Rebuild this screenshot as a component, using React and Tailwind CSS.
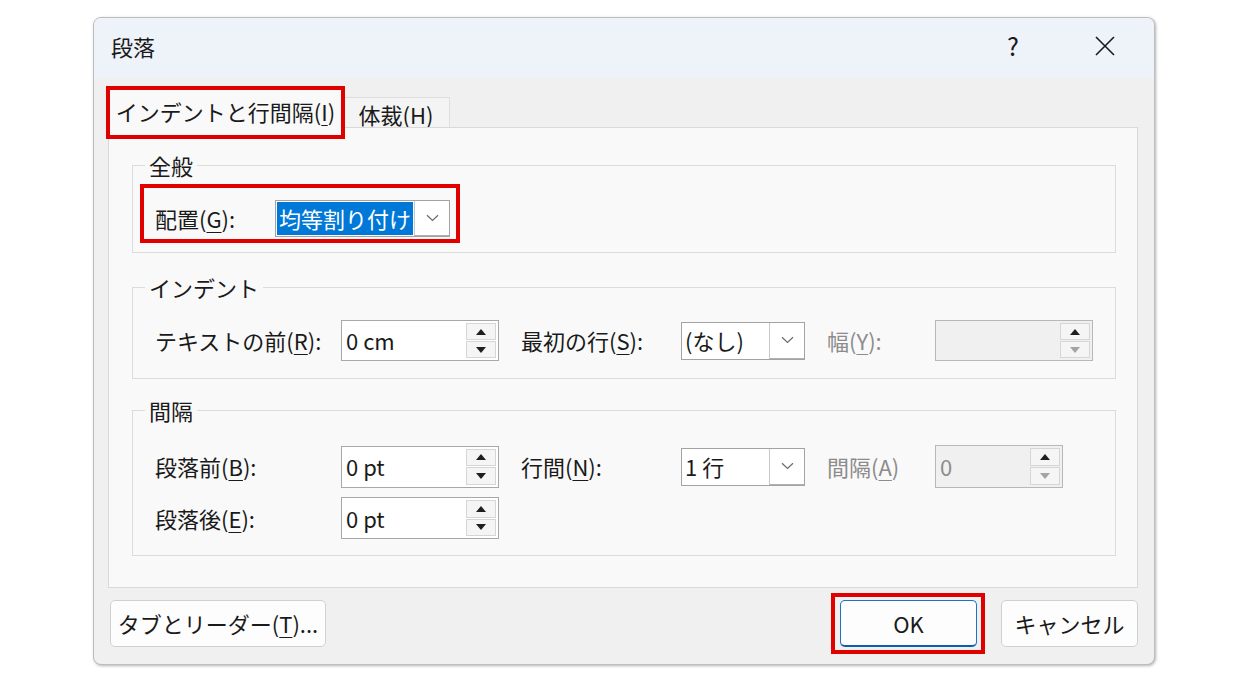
import React from 'react'

const Ul = ({ children }) => (
  <span className="underline underline-offset-[4px] decoration-1">{children}</span>
)

function Chevron() {
  return (
    <svg width="13" height="8" viewBox="0 0 13 8" fill="none">
      <path d="M1 1.2 L6.5 6.5 L12 1.2" stroke="#6b6b6b" strokeWidth="1.2" />
    </svg>
  )
}

function SpinButtons({ disabled = false }) {
  return (
    <div className="flex flex-col w-[32px] h-full py-[2px] pr-[2px] gap-[1px]">
      <div className="flex-1 flex items-center justify-center border border-[#d6d6d6] bg-[#f5f5f5]">
        <svg width="10" height="6" viewBox="0 0 10 6">
          <path d="M0 6 L5 0 L10 6Z" fill="#1f1f1f" />
        </svg>
      </div>
      <div className="flex-1 flex items-center justify-center border border-[#d6d6d6] bg-[#f5f5f5]">
        <svg width="10" height="6" viewBox="0 0 10 6">
          <path d="M0 0 L5 6 L10 0Z" fill={disabled ? '#a3a3a3' : '#1f1f1f'} />
        </svg>
      </div>
    </div>
  )
}

function Spin({ value, disabled = false, w = 'w-[158px]', h = 'h-[41px]' }) {
  return (
    <div
      className={`${w} ${h} flex border ${
        disabled ? 'bg-[#f0f0f0] border-[#b8b8b8] text-[#8c8c8c]' : 'bg-white border-[#a8a8a8] text-[#1a1a1a]'
      }`}
    >
      <div className="flex-1 flex items-center pl-[4px] text-[22px]">{value}</div>
      <SpinButtons disabled={disabled} />
    </div>
  )
}

function Combo({ value, w = 'w-[124px]', h = 'h-[38px]', selected = false }) {
  return (
    <div className={`${w} ${h} flex border border-[#a3a3a3] bg-white`}>
      <div className="flex-1 flex items-stretch p-[1px]">
        <span
          className={`flex items-center px-[2px] text-[22px] ${
            selected ? 'bg-[#0078d7] text-white' : 'text-[#1a1a1a]'
          }`}
        >
          {value}
        </span>
      </div>
      <div className="w-[35px] flex items-center justify-center border-l border-[#c9c9c9] border-b border-b-[#b0b0b0]">
        <Chevron />
      </div>
    </div>
  )
}

function Group({ title, h, children }) {
  return (
    <fieldset className={`${h} border border-[#dcdcdc] rounded-none`}>
      <legend className="ml-[12px] px-[4px] text-[22px] leading-[28px] text-[#1a1a1a]">{title}</legend>
      {children}
    </fieldset>
  )
}

export default function App() {
  return (
    <div className="min-h-screen bg-white pt-[17px] pl-[93px] font-['Noto_Sans_CJK_JP','Noto_Sans',sans-serif] text-[#1a1a1a]">
      <div className="w-[1062px] h-[648px] flex flex-col rounded-[8px] border border-[#bdbdbd] bg-[#f0f0f0] overflow-hidden shadow-[1px_1px_3px_rgba(0,0,0,0.3)]">
        {/* title bar */}
        <div className="h-[60px] shrink-0 bg-[#eef2f9] flex items-center justify-between pl-[17px] pr-[3px] pb-[5px]">
          <span className="text-[22px] leading-none">段落</span>
          <div className="flex h-full">
            <div className="w-[92px] flex items-center justify-center text-[25px] leading-none">?</div>
            <div className="w-[92px] flex items-center justify-center">
              <svg width="20" height="20" viewBox="0 0 20 20">
                <path d="M1 1 L19 19 M19 1 L1 19" stroke="#1a1a1a" strokeWidth="1.6" />
              </svg>
            </div>
          </div>
        </div>

        <div className="flex-1 flex flex-col pt-[9px] pl-[14px] pr-[16px]">
          {/* tabs */}
          <div className="h-[40px] flex items-end">
            <div className="relative z-10 w-[235px] h-[41px] -mb-px bg-[#f9f9f9] border border-b-0 border-[#d9d9d9] flex items-center justify-center pt-[6px] text-[22px]">
              <span>
                インデントと行間隔(<Ul>I</Ul>)
              </span>
              <span className="absolute -left-[3px] -top-[2px] w-[239px] h-[53px] border-[4px] border-[#e00000]" />
            </div>
            <div className="w-[107px] h-[30px] bg-[#f4f4f4] border border-b-0 border-l-0 border-[#dedede] flex items-center justify-center pt-[4px] text-[22px]">
              <span>
                体裁(<Ul>H</Ul>)
              </span>
            </div>
          </div>

          {/* panel */}
          <div className="h-[461px] bg-[#f9f9f9] border border-[#d9d9d9] pt-[23px] pl-[23px] pr-[21px] flex flex-col">
            <Group title="全般" h="h-[102px]">
              <div className="pt-[5px]">
                <div className="ml-[7px] w-[320px] h-[59px] border-[4px] border-[#e00000] flex items-center pt-[9px] pl-[11px]">
                  <span className="w-[120px] text-[22px]">
                    配置(<Ul>G</Ul>):
                  </span>
                  <Combo value="均等割り付け" w="w-[175px]" h="h-[37px]" selected />
                </div>
              </div>
            </Group>

            <div className="mt-[20px]">
              <Group title="インデント" h="h-[106px]">
                <div className="pt-[19px] pl-[22px] flex items-center">
                  <span className="w-[186px] text-[22px]">
                    テキストの前(<Ul>R</Ul>):
                  </span>
                  <Spin value="0 cm" />
                  <span className="ml-[22px] w-[160px] text-[22px]">
                    最初の行(<Ul>S</Ul>):
                  </span>
                  <Combo value="(なし)" />
                  <span className="ml-[22px] w-[108px] text-[22px] text-[#8c8c8c]">
                    幅(<Ul>Y</Ul>):
                  </span>
                  <Spin value="" disabled />
                </div>
              </Group>
            </div>

            <div className="mt-[17px]">
              <Group title="間隔" h="h-[160px]">
                <div className="pt-[21px] pl-[22px] flex flex-col gap-[9px]">
                  <div className="flex items-center">
                    <span className="w-[186px] text-[22px]">
                      段落前(<Ul>B</Ul>):
                    </span>
                    <Spin value="0 pt" h="h-[42px]" />
                    <span className="ml-[22px] w-[160px] text-[22px]">
                      行間(<Ul>N</Ul>):
                    </span>
                    <Combo value="1 行" />
                    <span className="ml-[22px] w-[108px] text-[22px] text-[#8c8c8c]">
                      間隔(<Ul>A</Ul>)
                    </span>
                    <Spin value="0" disabled w="w-[128px]" h="h-[43px]" />
                  </div>
                  <div className="flex items-center">
                    <span className="w-[186px] text-[22px]">
                      段落後(<Ul>E</Ul>):
                    </span>
                    <Spin value="0 pt" h="h-[42px]" />
                  </div>
                </div>
              </Group>
            </div>
          </div>

          {/* buttons */}
          <div className="mt-[12px] h-[47px] flex items-center justify-between">
            <button className="ml-[2px] w-[216px] h-[47px] rounded-[5px] border border-[#d0d0d0] bg-[#fdfdfd] text-[22px]">
              タブとリーダー(<Ul>T</Ul>)...
            </button>
            <div className="flex items-center">
              <div className="w-[154px] h-[61px] border-[4px] border-[#e00000] flex items-center pl-[5px]">
                <button className="w-[137px] h-[47px] rounded-[5px] border border-[#1a73c8] border-b-2 border-b-[#0a5fb0] bg-[#fdfdfd] text-[22px]">
                  OK
                </button>
              </div>
              <button className="ml-[16px] w-[137px] h-[47px] rounded-[5px] border border-[#d0d0d0] bg-[#fdfdfd] text-[22px]">
                キャンセル
              </button>
            </div>
          </div>
        </div>
      </div>
    </div>
  )
}
